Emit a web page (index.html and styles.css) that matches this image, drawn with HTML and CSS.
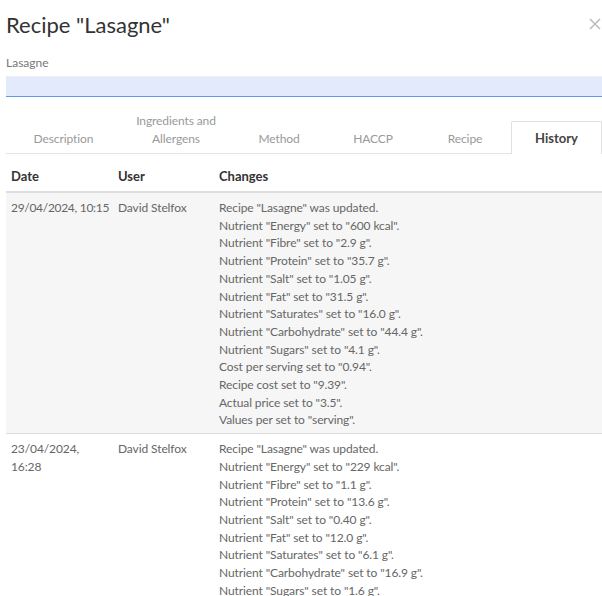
FILE: index.html
```html
<!DOCTYPE html>
<html>
<head>
<meta charset="utf-8">
<link rel="stylesheet" href="styles.css">
</head>
<body>
<div class="modal">
  <div class="header">
    <h1 class="title">Recipe "Lasagne"</h1>
    <svg class="close" width="12" height="12" viewBox="0 0 12 12"><path d="M1 1L11 11M11 1L1 11" stroke="#bdbdbd" stroke-width="1.6" fill="none"/></svg>
  </div>
  <label class="label">Lasagne</label>
  <div class="input"></div>
  <div class="tabs">
    <div class="tab t1">Description</div>
    <div class="tab t2">Ingredients and<br>Allergens</div>
    <div class="tab t3">Method</div>
    <div class="tab t4">HACCP</div>
    <div class="tab t5">Recipe</div>
    <div class="tab t6 active">History</div>
  </div>
  <table class="history">
    <thead>
      <tr><th class="c-date">Date</th><th class="c-user">User</th><th>Changes</th></tr>
    </thead>
    <tbody>
      <tr class="odd">
        <td class="nowrap">29/04/2024, 10:15</td>
        <td>David Stelfox</td>
        <td>Recipe "Lasagne" was updated.<br>Nutrient "Energy" set to "600 kcal".<br>Nutrient "Fibre" set to "2.9 g".<br>Nutrient "Protein" set to "35.7 g".<br>Nutrient "Salt" set to "1.05 g".<br>Nutrient "Fat" set to "31.5 g".<br>Nutrient "Saturates" set to "16.0 g".<br>Nutrient "Carbohydrate" set to "44.4 g".<br>Nutrient "Sugars" set to "4.1 g".<br>Cost per serving set to "0.94".<br>Recipe cost set to "9.39".<br>Actual price set to "3.5".<br>Values per set to "serving".</td>
      </tr>
      <tr>
        <td>23/04/2024,<br>16:28</td>
        <td>David Stelfox</td>
        <td>Recipe "Lasagne" was updated.<br>Nutrient "Energy" set to "229 kcal".<br>Nutrient "Fibre" set to "1.1 g".<br>Nutrient "Protein" set to "13.6 g".<br>Nutrient "Salt" set to "0.40 g".<br>Nutrient "Fat" set to "12.0 g".<br>Nutrient "Saturates" set to "6.1 g".<br>Nutrient "Carbohydrate" set to "16.9 g".<br>Nutrient "Sugars" set to "1.6 g".</td>
      </tr>
    </tbody>
  </table>
</div>
</body>
</html>
```
FILE: styles.css
```css
html, body {
  margin: 0;
  padding: 0;
  background: #fff;
  overflow: hidden;
}
body {
  font-family: Lato, "Liberation Sans", sans-serif;
  color: #666;
}
.modal {
  padding-left: 6px;
}
.header {
  display: flex;
  justify-content: space-between;
  align-items: center;
  height: 50px;
}
.title {
  margin: 0;
  font-weight: 400;
  font-size: 22px;
  color: #333;
  margin-top: -2px;
}
.close {
  margin-right: 1px;
  margin-top: -2px;
}
.label {
  display: block;
  font-size: 12px;
  color: #777;
  margin-top: 5px;
  height: 21px;
}
.input {
  height: 19px;
  background: #e3eafc;
  border-top: 1px solid #eef0f4;
  border-bottom: 1px solid #5b9bf0;
}
.tabs {
  display: grid;
  grid-template-columns: 115px 110px 96px 92px 92px 1fr;
  align-items: end;
  margin-top: 15px;
  border-bottom: 1px solid #e4e4e4;
}
.tab {
  text-align: center;
  font-size: 12px;
  letter-spacing: -0.1px;
  line-height: 18px;
  color: #999;
  padding: 0 0 5px;
}
.tab.active {
  background: #fff;
  color: #444;
  font-weight: 700;
  font-size: 13px;
  letter-spacing: 0;
  border: 1px solid #e0e0e0;
  border-bottom: none;
  border-radius: 2px 2px 0 0;
  padding-top: 7px;
  margin-bottom: -1px;
  padding-bottom: 7px;
}
.history {
  width: 100%;
  table-layout: fixed;
  border-collapse: collapse;
  margin-top: 7px;
  font-size: 12px;
  letter-spacing: -0.1px;
}
.history th {
  text-align: left;
  font-weight: 700;
  font-size: 13px;
  letter-spacing: 0;
  color: #333;
  padding: 7px 5px 6px;
  line-height: 17px;
  border-bottom: 2px solid #ddd;
}
.c-date { width: 97px; }
.c-user { width: 91px; }
.history td {
  vertical-align: top;
  line-height: 17.7px;
  padding: 6px 5px 4px;
  border-bottom: 1px solid #ddd;
}
.history td.nowrap {
  white-space: nowrap;
  letter-spacing: -0.3px;
}
.history tr.odd td {
  background: #f6f6f6;
}
```
